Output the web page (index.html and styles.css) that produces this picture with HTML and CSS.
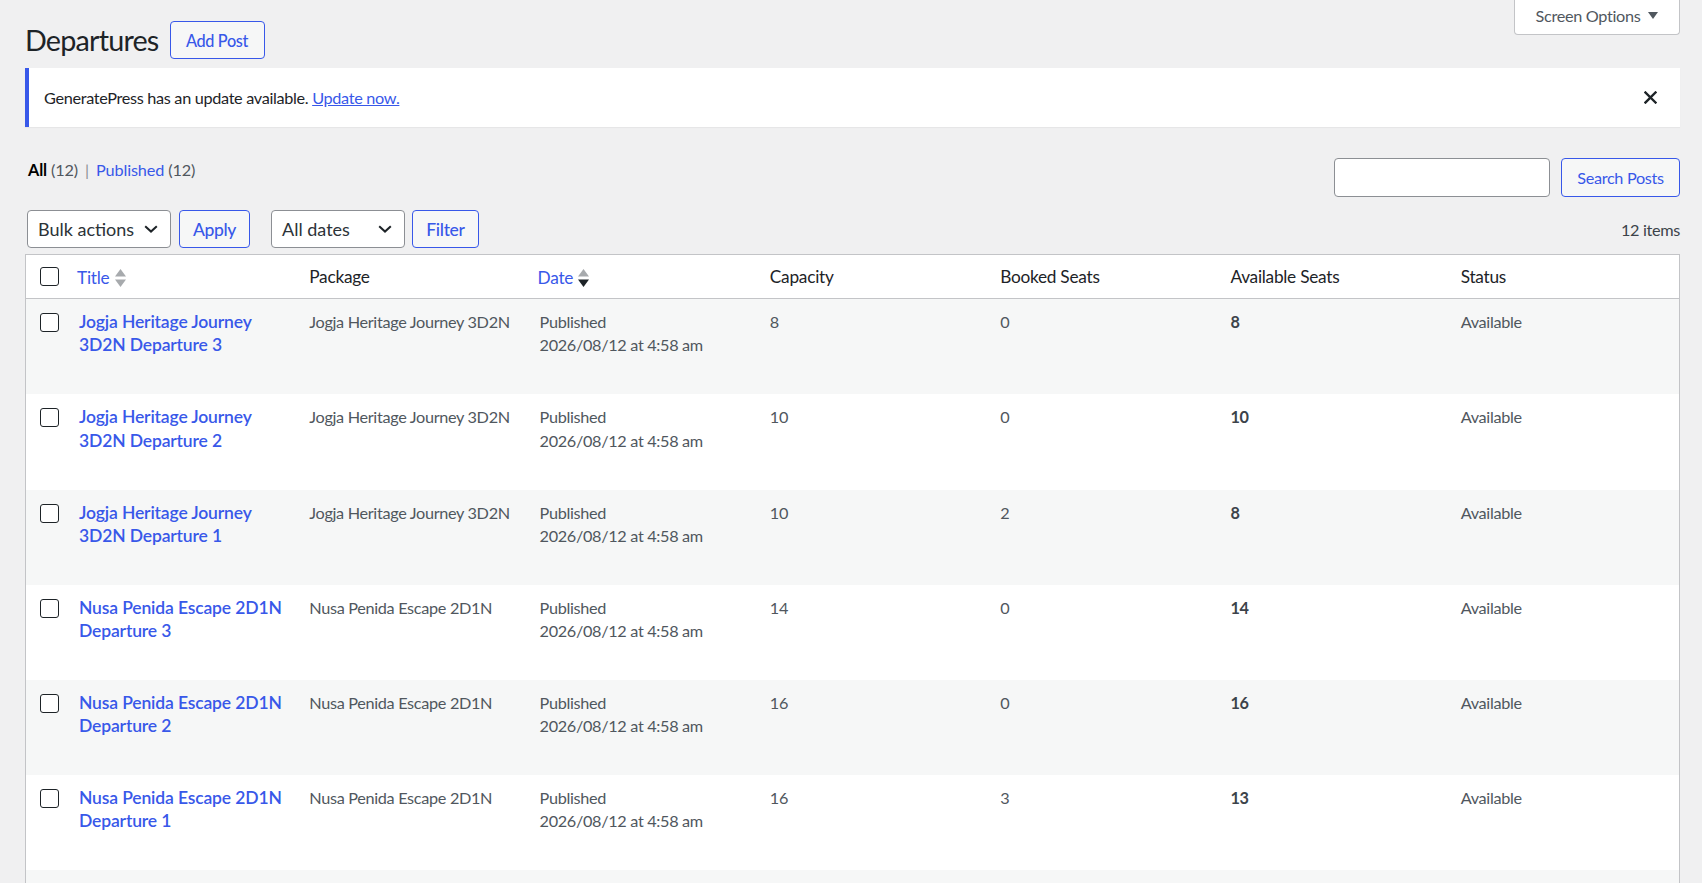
FILE: index.html
```html
<!DOCTYPE html>
<html lang="en">
<head>
<meta charset="utf-8">
<title>Departures</title>
<link rel="stylesheet" href="styles.css">
</head>
<body>
<div class="wrap">
  <header class="top">
    <div class="title-group">
      <h1>Departures</h1>
      <a class="btn title-action" href="#">Add Post</a>
    </div>
    <button class="screen-options" type="button">Screen Options
      <svg class="so-arrow" width="10" height="7" viewBox="0 0 10 7"><path d="M0 0H10L5 7Z" fill="#50575e"/></svg>
    </button>
  </header>

  <div class="notice">
    <p>GeneratePress has an update available. <a href="#">Update now.</a></p>
    <svg class="dismiss" width="13" height="13" viewBox="0 0 13 13"><path d="M1.5 1.5L11.5 11.5M11.5 1.5L1.5 11.5" stroke="#1d2327" stroke-width="2.4" stroke-linecap="square"/></svg>
  </div>

  <div class="filters-row">
    <ul class="subsubsub">
      <li><a class="current" href="#">All</a> <span class="count">(12)</span></li>
      <li class="sep">|</li>
      <li><a href="#">Published</a> <span class="count">(12)</span></li>
    </ul>
    <div class="search-box">
      <input class="search-input" type="search" aria-label="Search Posts">
      <button class="btn" type="button">Search Posts</button>
    </div>
  </div>

  <div class="tablenav">
    <div class="actions">
      <div class="select bulk">Bulk actions
        <svg width="14" height="8" viewBox="0 0 14 8"><path d="M1.2 1.2L7 6.6L12.8 1.2" fill="none" stroke="#1d2327" stroke-width="2"/></svg>
      </div>
      <button class="btn btn-lg" type="button">Apply</button>
      <div class="select dates">All dates
        <svg width="14" height="8" viewBox="0 0 14 8"><path d="M1.2 1.2L7 6.6L12.8 1.2" fill="none" stroke="#1d2327" stroke-width="2"/></svg>
      </div>
      <button class="btn btn-lg" type="button">Filter</button>
    </div>
    <div class="displaying-num">12 items</div>
  </div>

  <table class="list">
    <colgroup>
      <col class="col-cb"><col><col><col><col><col><col><col>
    </colgroup>
    <thead>
      <tr>
        <th class="check"><input type="checkbox" class="cb"></th>
        <th class="sortable"><a href="#">Title</a>
          <svg class="sort" width="11" height="18" viewBox="0 0 11 18"><path d="M5.5 0L11 7.5H0Z" fill="#a7aaad"/><path d="M5.5 18L11 10.5H0Z" fill="#a7aaad"/></svg>
        </th>
        <th>Package</th>
        <th class="sortable"><a href="#">Date</a>
          <svg class="sort" width="11" height="18" viewBox="0 0 11 18"><path d="M5.5 0L11 7.5H0Z" fill="#a7aaad"/><path d="M5.5 18L11 10.5H0Z" fill="#1d2327"/></svg>
        </th>
        <th>Capacity</th>
        <th>Booked Seats</th>
        <th>Available Seats</th>
        <th>Status</th>
      </tr>
    </thead>
    <tbody>
      <tr>
        <td class="check"><input type="checkbox" class="cb"></td>
        <td><a class="row-title" href="#"><span class="nw">Jogja Heritage Journey</span> 3D2N Departure 3</a></td>
        <td>Jogja Heritage Journey 3D2N</td>
        <td>Published<br>2026/08/12 at 4:58 am</td>
        <td>8</td><td>0</td><td><strong>8</strong></td><td>Available</td>
      </tr>
      <tr>
        <td class="check"><input type="checkbox" class="cb"></td>
        <td><a class="row-title" href="#"><span class="nw">Jogja Heritage Journey</span> 3D2N Departure 2</a></td>
        <td>Jogja Heritage Journey 3D2N</td>
        <td>Published<br>2026/08/12 at 4:58 am</td>
        <td>10</td><td>0</td><td><strong>10</strong></td><td>Available</td>
      </tr>
      <tr>
        <td class="check"><input type="checkbox" class="cb"></td>
        <td><a class="row-title" href="#"><span class="nw">Jogja Heritage Journey</span> 3D2N Departure 1</a></td>
        <td>Jogja Heritage Journey 3D2N</td>
        <td>Published<br>2026/08/12 at 4:58 am</td>
        <td>10</td><td>2</td><td><strong>8</strong></td><td>Available</td>
      </tr>
      <tr>
        <td class="check"><input type="checkbox" class="cb"></td>
        <td><a class="row-title" href="#"><span class="nw">Nusa Penida Escape 2D1N</span> Departure 3</a></td>
        <td>Nusa Penida Escape 2D1N</td>
        <td>Published<br>2026/08/12 at 4:58 am</td>
        <td>14</td><td>0</td><td><strong>14</strong></td><td>Available</td>
      </tr>
      <tr>
        <td class="check"><input type="checkbox" class="cb"></td>
        <td><a class="row-title" href="#"><span class="nw">Nusa Penida Escape 2D1N</span> Departure 2</a></td>
        <td>Nusa Penida Escape 2D1N</td>
        <td>Published<br>2026/08/12 at 4:58 am</td>
        <td>16</td><td>0</td><td><strong>16</strong></td><td>Available</td>
      </tr>
      <tr>
        <td class="check"><input type="checkbox" class="cb"></td>
        <td><a class="row-title" href="#"><span class="nw">Nusa Penida Escape 2D1N</span> Departure 1</a></td>
        <td>Nusa Penida Escape 2D1N</td>
        <td>Published<br>2026/08/12 at 4:58 am</td>
        <td>16</td><td>3</td><td><strong>13</strong></td><td>Available</td>
      </tr>
      <tr>
        <td class="check"><input type="checkbox" class="cb"></td>
        <td></td><td></td><td></td><td></td><td></td><td></td><td></td>
      </tr>
    </tbody>
  </table>
</div>
</body>
</html>
```

FILE: styles.css
```css
* { box-sizing: border-box; }

body {
  margin: 0;
  background: #f0f0f1;
  font-family: Lato, "Noto Sans", sans-serif;
  font-size: 16.25px;
  letter-spacing: -0.02em;
  color: #3c434a;
  height: 883px;
  overflow: hidden;
}

a { color: #3858e9; text-decoration: none; }

.wrap {
  padding: 0 22px 0 25px;
}

/* header */
.top {
  display: flex;
  justify-content: space-between;
  align-items: flex-start;
}

.title-group {
  display: flex;
  align-items: center;
  gap: 11px;
  padding-top: 21px;
}

h1 {
  margin: 0;
  font-size: 28.75px;
  font-weight: 400;
  letter-spacing: -0.028em;
  line-height: 38px;
  color: #1d2327;
}

.btn {
  display: inline-flex;
  align-items: center;
  justify-content: center;
  height: 38px;
  padding: 0 14px;
  border: 1px solid #3858e9;
  border-radius: 4px;
  background: #f6f7f7;
  color: #3858e9;
  font-family: inherit;
  font-size: 16.25px;
  letter-spacing: inherit;
  white-space: nowrap;
}

.title-action { font-weight: 500; width: 95px; padding: 0; }

.screen-options {
  display: flex;
  align-items: center;
  gap: 8px;
  height: 35px;
  width: 166px;
  justify-content: center;
  padding: 0 0 3px;
  border: 1px solid #c3c4c7;
  border-top: 0;
  border-radius: 0 0 4px 4px;
  background: #fff;
  color: #50575e;
  font-family: inherit;
  font-size: 16.25px;
  letter-spacing: inherit;
}

/* notice */
.notice {
  margin-top: 9px;
  height: 59px;
  display: flex;
  align-items: center;
  justify-content: space-between;
  background: #fff;
  border-left: 4px solid #3858e9;
  padding: 0 23px 0 15px;
  box-shadow: 0 1px 1px rgba(0, 0, 0, 0.04);
}

.notice p { margin: 0; color: #1d2327; }
.notice p a { text-decoration: underline; }

/* views + search */
.filters-row {
  margin-top: 31px;
  display: flex;
  justify-content: space-between;
  align-items: flex-start;
  height: 39px;
}

.subsubsub {
  list-style: none;
  margin: 0;
  padding: 0 0 0 3px;
  display: flex;
  gap: 7px;
  line-height: 23px;
  letter-spacing: -0.008em;
  color: #50575e;
}

.subsubsub .current { color: #000; font-weight: 700; }
.subsubsub .sep { color: #8c8f94; }

.search-box {
  display: flex;
  gap: 11px;
}

.search-input {
  width: 216px;
  height: 39px;
  border: 1px solid #8c8f94;
  border-radius: 4px;
  background: #fff;
  margin: 0;
}

.search-box .btn { height: 39px; width: 119px; padding: 0; }

/* tablenav */
.tablenav {
  margin-top: 13px;
  height: 38px;
  display: flex;
  justify-content: space-between;
  align-items: center;
}

.actions {
  display: flex;
  align-items: center;
  padding-left: 2px;
}

.select {
  height: 38px;
  display: flex;
  align-items: center;
  justify-content: space-between;
  padding: 0 12px 0 10px;
  border: 1px solid #8c8f94;
  border-radius: 4px;
  background: #fff;
  color: #2c3338;
  font-size: 18px;
  letter-spacing: 0;
}

.select.bulk { width: 144px; }
.select.dates { width: 134px; }

.btn-lg { font-size: 17.5px; padding: 0; font-weight: 500; }
.actions .btn-lg:nth-of-type(1) { width: 71px; margin: 0 21px 0 8px; }
.actions .btn-lg:nth-of-type(2) { width: 67px; margin-left: 7px; }

.displaying-num { color: #3c434a; }

/* table */
.list {
  margin-top: 6px;
  width: 100%;
  table-layout: fixed;
  border-collapse: separate;
  border-spacing: 0;
  background: #fff;
  border: 1px solid #c3c4c7;
}

.col-cb { width: 41px; }

.list th {
  text-align: left;
  font-weight: 400;
  font-size: 17.25px;
  letter-spacing: -0.015em;
  color: #1d2327;
  padding: 10px 10px 10px 12px;
  line-height: 21px;
  height: 42px;
  border-bottom: 1px solid #c3c4c7;
  white-space: nowrap;
}

.list th.sortable { padding-left: 10px; }
.list th.sortable a { vertical-align: middle; }
.sort { vertical-align: middle; margin-left: 1px; }

.list td {
  vertical-align: top;
  padding: 11px 10px 11px 12px;
  line-height: 23.3px;
  height: 95.2px;
  color: #50575e;
}

.list tbody tr:nth-child(odd) td { background: #f6f7f7; }

.list td strong { color: #3c434a; font-weight: 700; }

.list .check { padding: 0 0 0 14px; }
.list td.check { padding-top: 14px; }

.cb {
  -webkit-appearance: none;
  appearance: none;
  display: block;
  width: 19px;
  height: 19px;
  margin: 0;
  border: 1px solid #1d2327;
  border-radius: 3px;
  background: #fff;
}

.row-title {
  font-weight: 600;
  font-size: 17.5px;
  letter-spacing: -0.008em;
  color: #3858e9;
}

.nw { white-space: nowrap; }
```
